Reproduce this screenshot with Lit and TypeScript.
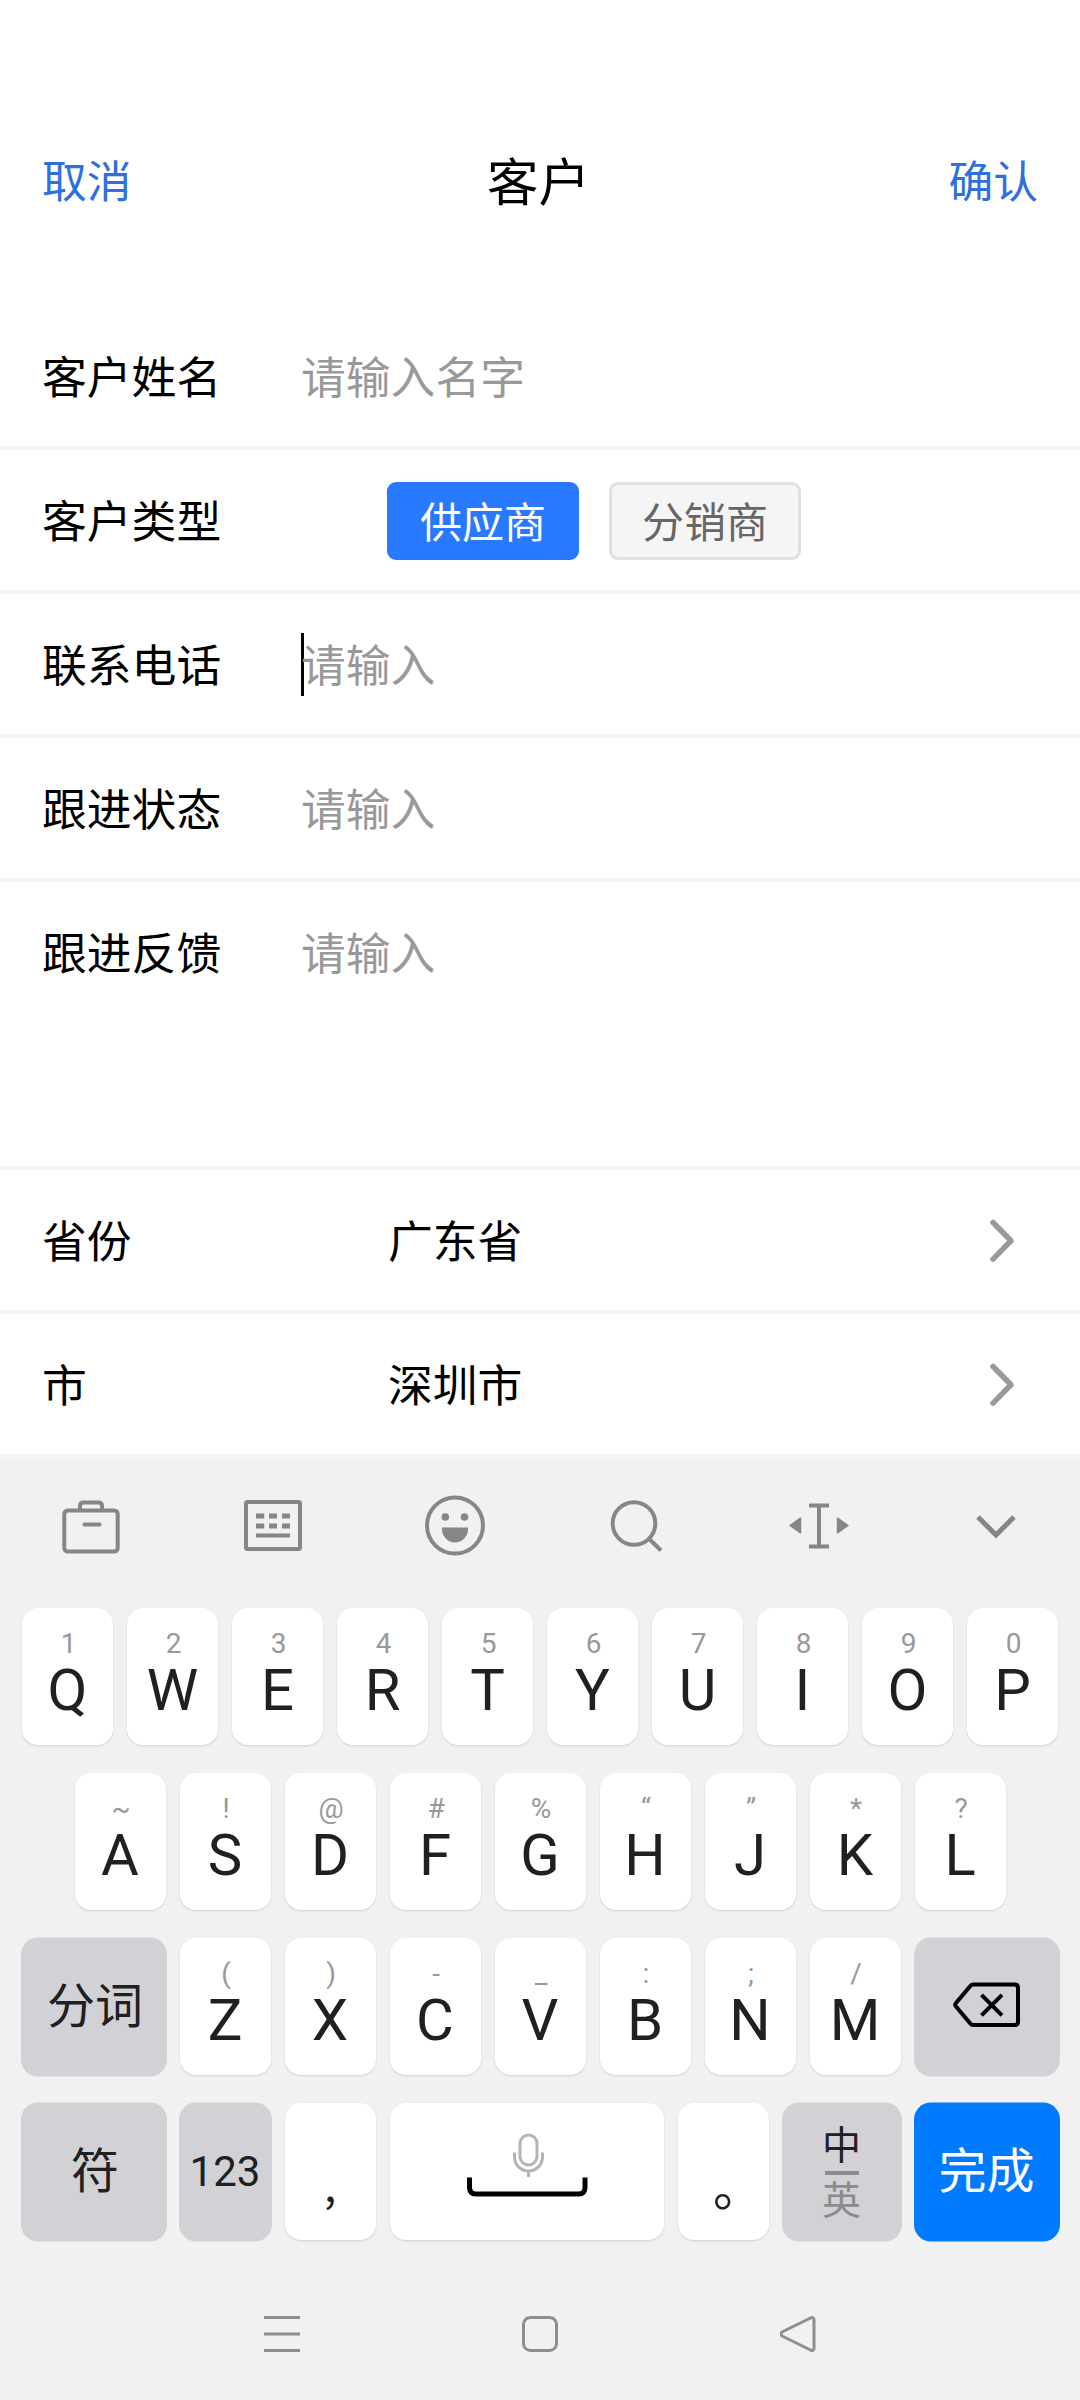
import { LitElement, html, css, svg, nothing } from "lit";
import { customElement, property } from "lit/decorators.js";

type Key = [string, string];

const ROW_1: Key[] = [["Q", "1"], ["W", "2"], ["E", "3"], ["R", "4"], ["T", "5"], ["Y", "6"], ["U", "7"], ["I", "8"], ["O", "9"], ["P", "0"]];
const ROW_2: Key[] = [["A", "~"], ["S", "!"], ["D", "@"], ["F", "#"], ["G", "%"], ["H", "“"], ["J", "”"], ["K", "*"], ["L", "?"]];
const ROW_3: Key[] = [["Z", "("], ["X", ")"], ["C", "-"], ["V", "_"], ["B", ":"], ["N", ";"], ["M", "/"]];

const TOOL_ICONS = [
  svg`<rect x="5.3" y="17.500" width="53.4" height="41" rx="3.5"/><path d="M21 17.500v-4.500q0-3.500 3.500-3.500h15q3.500 0 3.500 3.500V17.500"/><path d="M25.500 31.500h15" stroke-linecap="round"/>`,
  svg`<rect x="5" y="9" width="54" height="47" rx="1.500"/><path stroke-width="5" d="M15 23h8.200M28 23h8M41 23h8M15 33h8.200M28 33h8M41 33h8"/><path d="M15 42.500h34"/>`,
  svg`<circle cx="32" cy="32.500" r="28"/><g fill="currentColor" stroke="none"><circle cx="22.300" cy="24" r="3.800"/><circle cx="41.500" cy="24" r="3.800"/><path d="M19 34.500h26v1.500a13 13.500 0 0 1-26 0z"/></g>`,
  svg`<circle cx="29" cy="30.500" r="21.300"/><path d="M44.300 46L56 57.500"/>`,
  svg`<path d="M22 12.500h20M22 53.500h20M32 12.500v41"/><g fill="currentColor" stroke="currentColor" stroke-width="1.500" stroke-linejoin="round"><path d="M3 32.500l10.500-7.300v14.600z"/><path d="M61 32.500l-10.500-7.300v14.600z"/></g>`,
  svg`<path stroke-width="5" d="M9 24l18 18 18-18"/>`,
];

@customElement("form-row")
export class FormRow extends LitElement {
  @property() label = "";
  @property() placeholder = "";
  @property() value = "";
  @property({ type: Boolean }) focused = false;

  static styles = css`
    :host {
      display: flex;
      align-items: flex-start;
      box-sizing: border-box;
      height: 144px;
      padding: 0 60px 0 42px;
      border-bottom: 4px solid #f5f5f5;
      line-height: 137px;
      white-space: nowrap;
    }
    .label { width: 260px; flex: none; color: #000; }
    .field { display: flex; align-items: flex-start; height: 137px; color: #999; margin-left: -1px; }
    .caret { width: 3px; height: 63px; margin: 39px -3px 0 0; background: #000; }
    .value { flex: 1; padding-left: 86px; color: #000; }
    .arrow { width: 36px; height: 140px; flex: none; }
  `;

  render() {
    return html`
      <div class="label">${this.label}</div>
      ${this.placeholder
        ? html`<div class="field">${this.focused ? html`<span class="caret"></span>` : nothing}<span>${this.placeholder}</span></div>`
        : nothing}
      ${this.value
        ? html`<div class="value">${this.value}</div>
            <svg class="arrow" viewBox="0 0 36 140" fill="none" stroke="#999" stroke-width="5.500" stroke-linecap="round" stroke-linejoin="round">
              <path d="M9 52.500l18 18.300-18 18.300" />
            </svg>`
        : nothing}
      <slot></slot>
    `;
  }
}

@customElement("soft-keyboard")
export class SoftKeyboard extends LitElement {
  static styles = css`
    :host {
      display: flex;
      flex-direction: column;
      box-sizing: border-box;
      height: 942px;
      border-top: 2px solid #f6f6f6;
      background: #f1f1f1;
      color: #202020;
      font-family: Roboto, "Noto Sans CJK SC", sans-serif;
    }
    .tools { display: flex; gap: 118px; padding: 33px 0 0 59px; height: 115px; color: #868686; }
    .tool { width: 64px; height: 64px; fill: none; stroke: currentColor; stroke-width: 4; }
    .rows { display: flex; flex-direction: column; gap: 28px; }
    .row { display: flex; justify-content: center; gap: 14px; height: 137px; }
    .key {
      display: flex;
      flex-direction: column;
      align-items: center;
      box-sizing: border-box;
      width: 91px;
      border-radius: 16px;
      background: #fff;
      box-shadow: 0 1px 2px 0 #d0d0d0;
      white-space: nowrap;
    }
    .main { padding-top: 20px; }
    .hint { font-size: 28px; line-height: 32px; color: #999; padding-left: 2px; }
    .letter { font-size: 58px; line-height: 61px; }
    .func { justify-content: center; background: #d2d2d6; box-shadow: 0 0.5px 0 1px #d2d2d5; font-size: 48px; line-height: 60px; }
    .wide { width: 144px; }
    .shift { padding-left: 3px; }
    .num { font-size: 42px; }
    .space { width: 274px; }
    .glyph { width: 100%; height: 137px; }
    .punct { font-family: "Noto Sans CJK SC", sans-serif; font-size: 50px; line-height: 60px; }
    .comma { padding-top: 50px; font-size: 44px; }
    .stop { padding: 51px 0 0 30px; }
    .lang { width: 118px; font-size: 39px; line-height: 50px; padding-top: 3px; }
    .bar { width: 34px; height: 4px; margin: 0 0 1px; background: #8b8b8d; }
    .alt { color: #8b8b8d; }
    .done { background: #007aff; box-shadow: 0 0.5px 0 1px #007aff; color: #fff; }
    .nav { display: flex; gap: 210px; padding: 68px 0 0 256px; }
    .navicon { width: 52px; height: 52px; fill: none; stroke: #8e8e8e; stroke-width: 3; stroke-linejoin: round; }
  `;

  private letters(keys: Key[]) {
    return keys.map(
      ([letter, hint]) => html`<div class="key main"><span class="hint">${hint}</span><span class="letter">${letter}</span></div>`
    );
  }

  render() {
    return html`
      <div class="tools">${TOOL_ICONS.map((icon) => html`<svg class="tool" viewBox="0 0 64 64">${icon}</svg>`)}</div>
      <div class="rows">
        <div class="row">${this.letters(ROW_1)}</div>
        <div class="row">${this.letters(ROW_2)}</div>
        <div class="row">
          <div class="key func wide shift">分词</div>
          ${this.letters(ROW_3)}
          <div class="key func wide">
            <svg class="glyph" viewBox="0 0 144 137" fill="none" stroke="#000" stroke-width="4" stroke-linejoin="round" stroke-linecap="round">
              <path d="M58 46.500h41.500q3.500 0 3.500 3.500v33.500q0 3.500-3.500 3.500H58q-1.500 0-2.500-1.200L41 68.500q-1.500-1.800 0-3.500L55.500 47.700q1-1.200 2.500-1.200z" />
              <path stroke-linecap="butt" d="M66.500 56.800l20.500 20.500M87 56.800L66.500 77.300" />
            </svg>
          </div>
        </div>
        <div class="row">
          <div class="key func wide shift">符</div>
          <div class="key func num">123</div>
          <div class="key punct comma">,</div>
          <div class="key space">
            <svg class="glyph" viewBox="0 0 274 137" fill="none">
              <g stroke="#b4b4b4" stroke-width="3">
                <rect x="130" y="32" width="17" height="30" rx="8.500" />
                <path d="M124.500 49.500v4.500a14 14 0 0 0 28 0V49.500M138.500 68.500v5.500" />
              </g>
              <path stroke="#000" stroke-width="5" d="M79.500 74.500v10q0 6.500 6.500 6.500h102.500q6.500 0 6.500-6.500V74.500" />
            </svg>
          </div>
          <div class="key punct stop">。</div>
          <div class="key func lang"><span>中</span><span class="bar"></span><span class="alt">英</span></div>
          <div class="key func wide done">完成</div>
        </div>
      </div>
      <div class="nav">
        <svg class="navicon" viewBox="0 0 52 52"><path d="M8 9.500h36M8 26h36M8 42.500h36" /></svg>
        <svg class="navicon" viewBox="0 0 52 52"><rect x="5.500" y="9.500" width="33" height="33" rx="7" /></svg>
        <svg class="navicon" viewBox="0 0 52 52"><path d="M3 23.500L30.500 10q3.500-1.500 3.500 2v28q0 3.500-3.500 2L3 28.500q-4.500-2.500 0-5z" /></svg>
      </div>
    `;
  }
}

@customElement("app-root")
export class AppRoot extends LitElement {
  static styles = css`
    :host {
      display: flex;
      flex-direction: column;
      width: 1080px;
      height: 2400px;
      overflow: hidden;
      background: #fff;
      font-family: "Noto Sans CJK SC", sans-serif;
      font-size: 44.8px;
      color: #000;
    }
    .header {
      display: grid;
      grid-template-columns: 1fr auto 1fr;
      align-items: center;
      box-sizing: border-box;
      height: 306px;
      padding: 51px 42px 0;
      align-content: center;
    }
    .action { color: #2f6fde; }
    .end { text-align: right; }
    .title { font-size: 51.5px; padding-right: 3px; }
    .tall { height: 288px; }
    .chips { display: flex; gap: 30px; padding: 32px 0 0 85px; }
    .chip {
      box-sizing: border-box;
      width: 192px;
      height: 78px;
      border: 3px solid #e0e0e0;
      border-radius: 9px;
      background: #f5f5f5;
      color: #666;
      font-size: 42px;
      line-height: 69px;
      text-align: center;
    }
    .on { background: #2979ff; border-color: #2979ff; color: #fff; }
  `;

  render() {
    return html`
      <div class="header">
        <div class="action">取消</div>
        <div class="title">客户</div>
        <div class="action end">确认</div>
      </div>
      <form-row label="客户姓名" placeholder="请输入名字"></form-row>
      <form-row label="客户类型">
        <div class="chips">
          <div class="chip on">供应商</div>
          <div class="chip">分销商</div>
        </div>
      </form-row>
      <form-row label="联系电话" placeholder="请输入" focused></form-row>
      <form-row label="跟进状态" placeholder="请输入"></form-row>
      <form-row class="tall" label="跟进反馈" placeholder="请输入"></form-row>
      <form-row label="省份" value="广东省"></form-row>
      <form-row label="市" value="深圳市"></form-row>
      <soft-keyboard></soft-keyboard>
    `;
  }
}
